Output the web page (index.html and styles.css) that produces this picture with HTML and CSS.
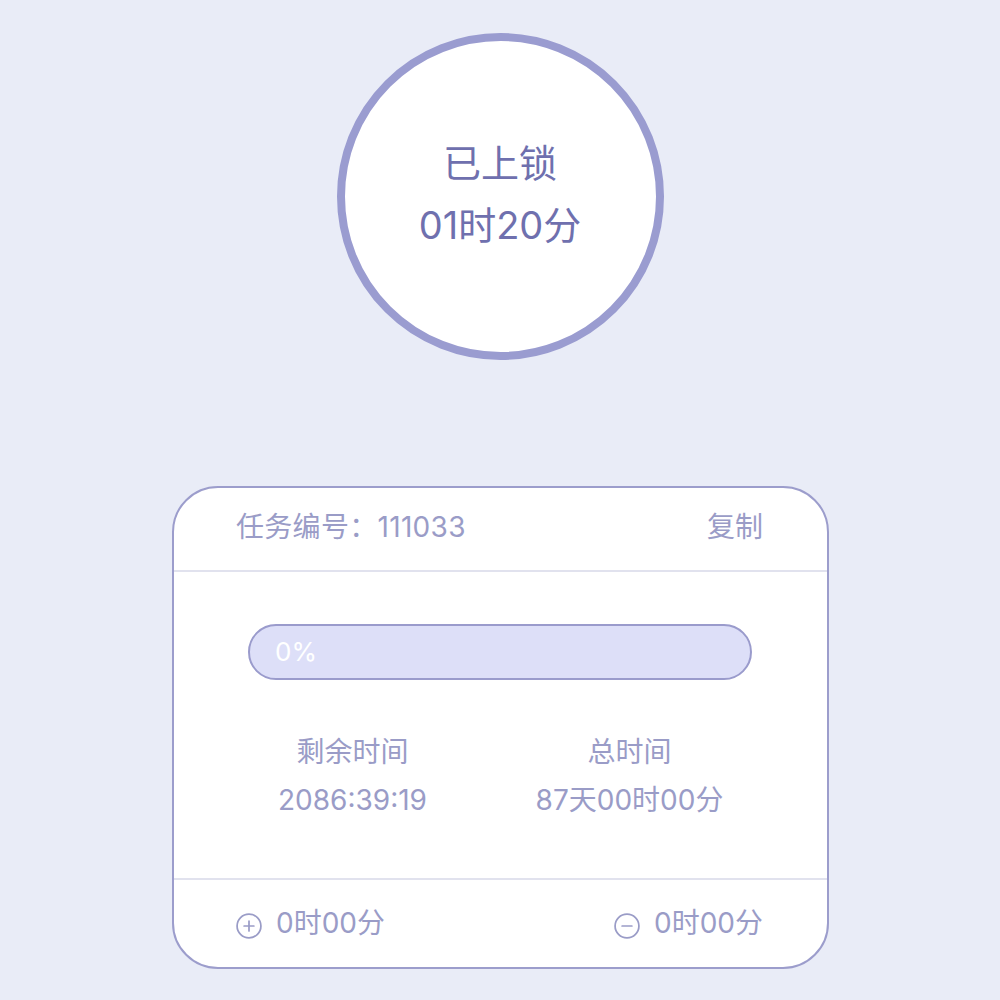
FILE: index.html
```html
<!DOCTYPE html>
<html lang="zh-CN">
<head>
<meta charset="utf-8">
<link rel="stylesheet" href="styles.css">
</head>
<body>
<div class="page">
  <div class="lock-circle">
    <div class="lock-status">已上锁</div>
    <div class="lock-time">01时20分</div>
  </div>
  <div class="card">
    <div class="card-header">
      <span class="task-no">任务编号：111033</span>
      <span class="copy">复制</span>
    </div>
    <div class="card-body">
      <div class="progress">
        <span class="progress-text">0%</span>
      </div>
      <div class="stats">
        <div class="stat">
          <div class="stat-label">剩余时间</div>
          <div class="stat-value">2086:39:19</div>
        </div>
        <div class="stat">
          <div class="stat-label">总时间</div>
          <div class="stat-value">87天00时00分</div>
        </div>
      </div>
    </div>
    <div class="card-footer">
      <div class="adjust">
        <svg class="icon" viewBox="0 0 24 24" width="26" height="26">
          <circle cx="12" cy="12" r="11" fill="none" stroke="currentColor" stroke-width="1.6"/>
          <path d="M12 7.5v9M7.5 12h9" stroke="currentColor" stroke-width="1.6" stroke-linecap="round"/>
        </svg>
        <span>0时00分</span>
      </div>
      <div class="adjust">
        <svg class="icon" viewBox="0 0 24 24" width="26" height="26">
          <circle cx="12" cy="12" r="11" fill="none" stroke="currentColor" stroke-width="1.6"/>
          <path d="M7.5 12h9" stroke="currentColor" stroke-width="1.6" stroke-linecap="round"/>
        </svg>
        <span>0时00分</span>
      </div>
    </div>
  </div>
</div>
</body>
</html>
```

FILE: styles.css
```css
html, body {
  margin: 0;
  padding: 0;
  background: #e9ecf7;
}
body {
  font-family: "Inter", "Noto Sans CJK SC", sans-serif;
}
.page {
  width: 1000px;
  height: 1000px;
  display: flex;
  flex-direction: column;
  align-items: center;
}
.lock-circle {
  margin-top: 33px;
  width: 311px;
  height: 311px;
  border: 8px solid #9a9cd0;
  border-radius: 50%;
  background: #ffffff;
  display: flex;
  flex-direction: column;
  align-items: center;
  justify-content: center;
  color: #6f70ae;
}
.lock-status {
  font-size: 38px;
  line-height: 62px;
  margin-top: -6px;
}
.lock-time {
  font-size: 38px;
  line-height: 62px;
}
.card {
  margin-top: 126px;
  margin-left: 1px;
  width: 653px;
  height: 479px;
  border: 2px solid #9c9dcc;
  border-radius: 46px;
  background: #ffffff;
  color: #9a9cc7;
  display: flex;
  flex-direction: column;
}
.card-header {
  height: 82px;
  border-bottom: 2px solid #e1e2ee;
  display: flex;
  align-items: center;
  justify-content: space-between;
  padding: 0 64px 0 62px;
  font-size: 28px;
}
.card-header span {
  line-height: 1;
  margin-top: -4px;
}
.task-no {
  letter-spacing: 0.3px;
}
.card-body {
  padding-top: 52px;
  border-bottom: 2px solid #e1e2ee;
  height: 254px;
}
.progress {
  margin: 0 75px 0 74px;
  height: 52px;
  border: 2px solid #9a9bcc;
  border-radius: 28px;
  background: #dddff8;
  display: flex;
  align-items: center;
  padding-left: 25px;
}
.progress-text {
  color: #ffffff;
  font-size: 26px;
  line-height: 1;
}
.stats {
  margin: 48px 59px 0 40px;
  display: grid;
  grid-template-columns: 1fr 1fr;
}
.stat {
  text-align: center;
}
.stat-label,
.stat-value {
  font-size: 28px;
  line-height: 48px;
}
.card-footer {
  flex: 1;
  display: flex;
  align-items: center;
  justify-content: space-between;
  padding: 0 64px 0 62px;
}
.adjust {
  display: flex;
  align-items: center;
  gap: 14px;
  font-size: 28px;
}
.adjust span {
  line-height: 1;
  margin-top: -2px;
}
.icon {
  color: #9a9cc7;
  margin-top: 4px;
}
```
